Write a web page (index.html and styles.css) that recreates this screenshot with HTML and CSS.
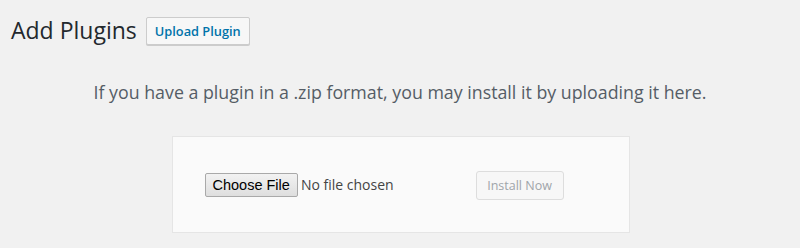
FILE: index.html
```html
<!DOCTYPE html>
<html>
<head>
<meta charset="utf-8">
<link rel="stylesheet" href="styles.css">
</head>
<body>
<div class="wrap">
  <div class="title-row">
    <h1 class="title">Add Plugins</h1>
    <a class="page-action">Upload Plugin</a>
  </div>
  <p class="install-help">If you have a plugin in a .zip format, you may install it by uploading it here.</p>
  <div class="upload-box">
    <div class="file-field">
      <span class="choose-btn">Choose File</span>
      <span class="file-status">No file chosen</span>
    </div>
    <span class="install-btn">Install Now</span>
  </div>
</div>
</body>
</html>
```
FILE: styles.css
```css
html, body {
  margin: 0;
  padding: 0;
  background: #f1f1f1;
}
body {
  font-family: "Open Sans", "Noto Sans", sans-serif;
  color: #23282d;
}
.wrap {
  padding: 13px 0 0 11px;
}
.title-row {
  display: flex;
  align-items: center;
  gap: 9px;
  height: 35px;
}
.title {
  margin: 0;
  font-size: 23px;
  font-weight: 400;
  line-height: 29px;
  color: #23282d;
}
.page-action {
  display: inline-flex;
  align-items: center;
  box-sizing: border-box;
  height: 28px;
  padding: 0 8px;
  border: 1px solid #cccccc;
  border-radius: 2px;
  background: #f7f7f7;
  color: #0073aa;
  font-size: 12.8px;
  font-weight: 600;
  box-shadow: 0 1px 0 #cccccc;
  margin-top: 1px;
}
.install-help {
  margin: 32px 0 0 -11px;
  text-align: center;
  font-size: 17.8px;
  line-height: 24px;
  color: #555d66;
}
.upload-box {
  box-sizing: border-box;
  width: 458px;
  height: 97px;
  margin: 32px auto 0;
  padding: 0 0 0 32px;
  background: #fafafa;
  border: 1px solid #e5e5e5;
  display: flex;
  align-items: center;
  position: relative;
  left: -5px;
}
.file-field {
  display: flex;
  align-items: center;
  width: 271px;
}
.choose-btn {
  box-sizing: border-box;
  height: 24px;
  padding: 0 7px;
  display: inline-flex;
  align-items: center;
  font-family: "Liberation Sans", Arial, sans-serif;
  font-size: 14.5px;
  color: #000;
  background: linear-gradient(#f2f2f2, #dedede);
  border: 1px solid #a9a9a9;
  border-radius: 2px;
}
.file-status {
  margin-left: 3px;
  font-size: 14px;
  color: #444;
}
.install-btn {
  box-sizing: border-box;
  height: 29px;
  width: 88px;
  display: inline-flex;
  align-items: center;
  justify-content: center;
  font-size: 12.5px;
  color: #a0a5aa;
  background: #f7f7f7;
  border: 1px solid #dddddd;
  border-radius: 3px;
  margin-top: 2px;
}
```
